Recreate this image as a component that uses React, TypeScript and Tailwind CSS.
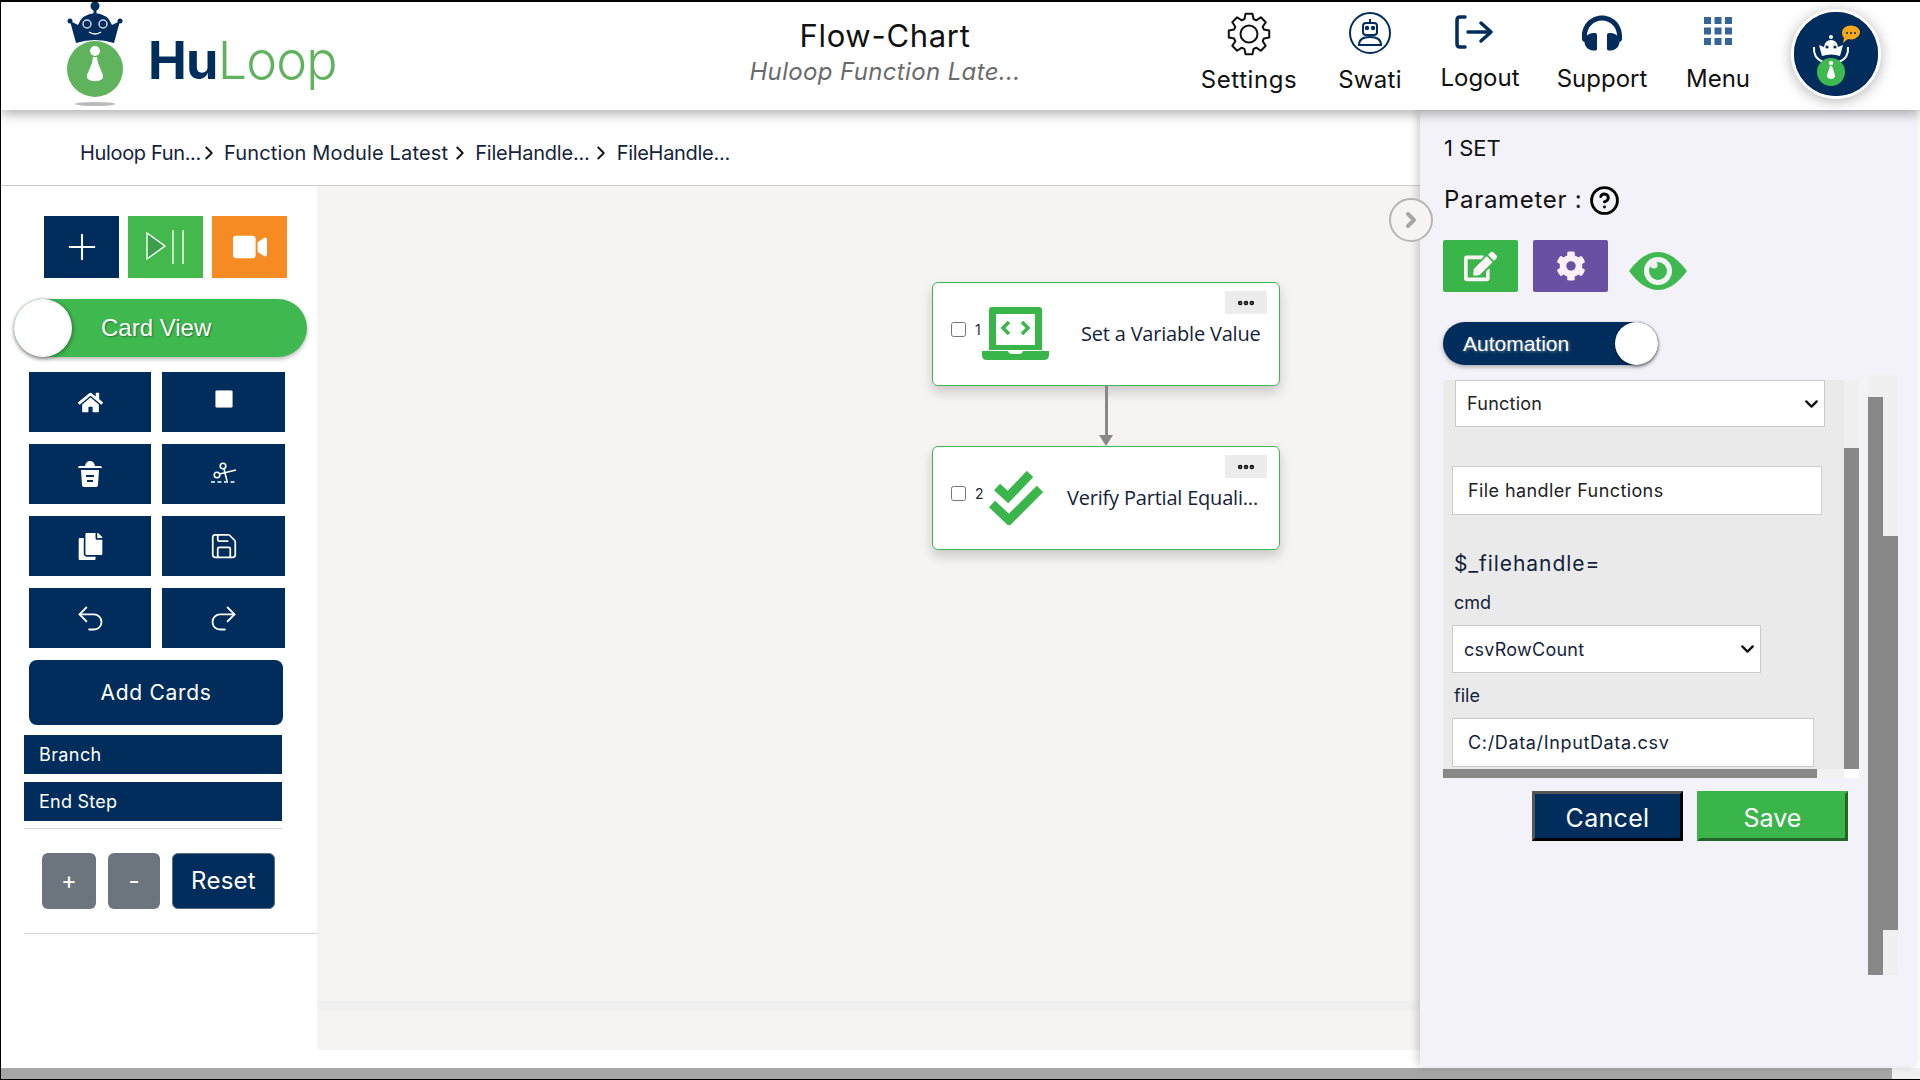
import { Plus, Save, Undo2, Redo2, CircleHelp, ChevronRight, ChevronDown, Ellipsis } from 'lucide-react'
import { FaHome, FaCopy, FaVideo, FaHeadphones, FaEdit, FaCog } from 'react-icons/fa'

const NAVY = '#002d5b'

function LogoBot() {
  return (
    <svg width="70" height="110" viewBox="60 0 70 110" className="shrink-0">
      <circle cx="95" cy="6" r="4.5" fill={NAVY} />
      <rect x="93.5" y="8" width="3" height="8" fill={NAVY} />
      <circle cx="70" cy="21" r="2.5" fill={NAVY} />
      <circle cx="120" cy="21" r="2.5" fill={NAVY} />
      <path d="M70 21 L78 25 Q82 14 95 13 Q108 14 112 25 L120 21 L114 43 Q95 37 76 43 Z" fill={NAVY} />
      <circle cx="87" cy="24" r="4" fill={NAVY} stroke="#cfd8e3" strokeWidth="1.5" />
      <circle cx="103" cy="24" r="4" fill={NAVY} stroke="#cfd8e3" strokeWidth="1.5" />
      <path d="M89 32 Q95 36 101 32" stroke="#fff" strokeWidth="1.5" fill="none" />
      <circle cx="95" cy="69" r="28" fill="#5fb35d" />
      <circle cx="95" cy="51" r="5" fill="#fff" />
      <path d="M93 57 h4 l1 6 l5 12 q1 6 -8 6 q-9 0 -8 -6 l5 -12 z" fill="#fff" />
      <ellipse cx="95" cy="104" rx="20" ry="2" fill="#bbb" />
    </svg>
  )
}

function AvatarBot() {
  return (
    <svg width="84" height="84" viewBox="0 0 84 84">
      <circle cx="42" cy="42" r="42" fill={NAVY} />
      <path d="M48 21 a9 7 0 1 1 6 6 l-5 4 l1 -5 a7 7 0 0 1 -2 -5z" fill="#f5a81c" />
      <circle cx="53" cy="21" r="1" fill={NAVY} />
      <circle cx="57" cy="21" r="1" fill={NAVY} />
      <circle cx="61" cy="21" r="1" fill={NAVY} />
      <circle cx="37" cy="25" r="2" fill="#fff" />
      <path d="M25 33 L30 35 Q31 28 37 28 Q43 28 44 35 L49 33 L46 44 Q37 41 28 44 Z" fill="#fff" />
      <circle cx="33" cy="35" r="1.6" fill={NAVY} />
      <circle cx="41" cy="35" r="1.6" fill={NAVY} />
      <path d="M20 35 Q19 46 29 50 M54 35 Q55 46 45 50" stroke="#fff" strokeWidth="2" fill="none" />
      <circle cx="37" cy="60" r="14" fill="#3fb94f" />
      <circle cx="37" cy="51" r="2.2" fill="#fff" />
      <path d="M36 54 h2 l3 9 q0 4 -4 4 q-4 0 -4 -4z" fill="#fff" />
    </svg>
  )
}

// 8 tooth cog outline
const gearPoints = Array.from({ length: 8 }, (_, i) => {
  const a = (i * Math.PI) / 4
  const pt = (r: number, off: number) => {
    const x = 22 + r * Math.cos(a + off)
    const y = 22 + r * Math.sin(a + off)
    return `${x.toFixed(2)},${y.toFixed(2)}`
  }
  return [pt(15.5, -0.3), pt(20.5, -0.17), pt(20.5, 0.17), pt(15.5, 0.3)].join(' ')
}).join(' ')

function GearIcon() {
  return (
    <svg width="44" height="44" viewBox="0 0 44 44" fill="none" stroke="#111" strokeWidth="2" strokeLinejoin="round">
      <polygon points={gearPoints} />
      <circle cx="22" cy="22" r="8.5" />
    </svg>
  )
}

function SwatiIcon() {
  return (
    <svg width="42" height="42" viewBox="0 0 42 42" fill="none" stroke={NAVY} strokeWidth="2">
      <circle cx="21" cy="21" r="20" />
      <rect x="14" y="11" width="14" height="12" rx="3" />
      <circle cx="18" cy="16" r="1.2" fill={NAVY} />
      <circle cx="24" cy="16" r="1.2" fill={NAVY} />
      <path d="M21 7 v4" />
      <path d="M10 33 Q10 25 21 25 Q32 25 32 33 Z" />
    </svg>
  )
}

function LogoutIcon() {
  return (
    <svg width="40" height="34" viewBox="0 0 40 34" fill="none" stroke={NAVY} strokeWidth="3.5" strokeLinecap="round" strokeLinejoin="round">
      <path d="M10 2 H5 Q2 2 2 5 V29 Q2 32 5 32 H10" />
      <path d="M13 17 H36 M26 8 L36 17 L26 26" />
    </svg>
  )
}

function MenuIcon() {
  const spots = [0, 1, 2].flatMap(r => [0, 1, 2].map(c => [c, r]))
  return (
    <svg width="28" height="28" viewBox="0 0 28 28">
      {spots.map(([c, r]) => (
        <rect key={`${c}-${r}`} x={c * 10.5} y={r * 10.5} width="7" height="7" fill="#34659a" />
      ))}
    </svg>
  )
}

function PlayBars() {
  return (
    <svg width="40" height="36" viewBox="0 0 40 36" fill="none" stroke="#fff" strokeWidth="1.4">
      <path d="M1 4 L19 17 L1 30 Z" fill="#3f9e4c" />
      <path d="M27 1 V35 M37 1 V35" />
    </svg>
  )
}

function TrashIcon() {
  return (
    <svg width="24" height="28" viewBox="0 0 24 28" fill="#fff">
      <path d="M0 8 Q0 6 2 6 H7 Q8 1 12 1 Q16 1 17 6 H22 Q24 6 24 8 Z" />
      <path d="M3 10 H21 L20 25 Q20 27 17 27 H7 Q4 27 4 25 Z" />
      <rect x="8" y="15" width="8" height="2" fill={NAVY} />
      <rect x="9" y="20" width="6" height="2" fill={NAVY} />
    </svg>
  )
}

function CutIcon() {
  return (
    <svg width="26" height="24" viewBox="0 0 26 24" fill="none" stroke="#fff" strokeWidth="1.6">
      <circle cx="12" cy="4" r="2.8" />
      <circle cx="6" cy="13" r="2.8" />
      <path d="M13 7 L16 19 M8.5 12 L25 8" />
      <path d="M0 20 H25" strokeDasharray="4 2.5" />
    </svg>
  )
}

function LaptopIcon() {
  return (
    <svg width="67" height="54" viewBox="0 0 67 54">
      <path d="M8 0 H57 Q60 0 60 3 V43 H7 V3 Q7 0 10 0 Z" fill="#3ab54a" />
      <rect x="14" y="7" width="39" height="31" fill="#fff" />
      <path d="M27 15 L21 21 L27 27 M40 15 L46 21 L40 27" fill="none" stroke="#3ab54a" strokeWidth="3.5" />
      <path d="M0 44 H26 Q27 47 30 47 H37 Q40 47 41 44 H67 V48 Q67 53 62 53 H5 Q0 53 0 48 Z" fill="#3ab54a" />
    </svg>
  )
}

function ChecksIcon() {
  return (
    <svg width="54" height="54" viewBox="0 0 54 54" fill="none" stroke="#3ab54a" strokeWidth="9">
      <path d="M8 16 L19 26 L41 3" />
      <path d="M3 33 L20 49 L51 18" />
    </svg>
  )
}

function EyeIcon() {
  return (
    <svg width="58" height="38" viewBox="0 0 58 38">
      <path d="M0 19 Q14 0 29 0 Q44 0 58 19 Q44 38 29 38 Q14 38 0 19 Z" fill="#3fb94f" />
      <circle cx="29" cy="19" r="14" fill="#f2f2f8" />
      <circle cx="29" cy="19" r="9" fill="#3fb94f" />
      <circle cx="25" cy="13" r="3.5" fill="#f2f2f8" />
    </svg>
  )
}

const gridButtons = [
  <FaHome size={25} color="#fff" className="mt-[1px]" />,
  <span className="block w-[18px] h-[18px] -mt-[6px] rounded-[2px] bg-white border border-gray-400" />,
  <TrashIcon />,
  <CutIcon />,
  <FaCopy size={27} color="#fff" />,
  <Save size={30} color="#fff" strokeWidth={1.4} />,
  <Undo2 size={33} color="#fff" strokeWidth={1.3} />,
  <Redo2 size={33} color="#fff" strokeWidth={1.3} />,
]

function FlowCard({ top, num, icon, label, pad }: { top: number; num: string; icon: React.ReactNode; label: string; pad: string }) {
  return (
    <div
      className="absolute left-[615px] w-[348px] h-[104px] bg-white border border-[#3fb94f] rounded-[6px] shadow-[0_6px_12px_rgba(0,0,0,0.18)]"
      style={{ top }}
    >
      <div className="absolute right-[12px] top-[8px] w-[42px] h-[23px] bg-[#ececec] flex items-center justify-center">
        <Ellipsis size={20} strokeWidth={3.5} color="#111" />
      </div>
      <div className="flex items-center h-full pl-[18px]">
        <input type="checkbox" className="w-[15px] h-[15px] -mt-[10px]" />
        <span className="ml-[9px] w-[8px] -mt-[10px] text-[14px] text-gray-800">{num}</span>
        <div className="-ml-[1px] w-[67px] flex justify-center">{icon}</div>
        <span className={`${pad} text-[20px] tracking-[-0.2px] text-[#14233a] whitespace-nowrap [font-family:'Open_Sans',sans-serif]`}>{label}</span>
      </div>
    </div>
  )
}

function PanelSelect({ value, className }: { value: string; className: string }) {
  return (
    <div className={`relative shrink-0 ${className}`}>
      <select defaultValue={value} className="w-full h-full appearance-none bg-white border border-[#ccc] pl-[11px] tracking-[0.25px]">
        <option>{value}</option>
      </select>
      <ChevronDown size={21} color="#111" strokeWidth={2.6} className="absolute right-[3px] top-1/2 -translate-y-1/2 pointer-events-none" />
    </div>
  )
}

export default function App() {
  return (
    <div className="w-[1920px] h-[1080px] overflow-hidden flex flex-col bg-white border-l border-t-2 border-b border-black text-[#14233a] [font-family:Inter,sans-serif]">
      {/* Header */}
      <header className="relative z-20 h-[108px] shrink-0 flex bg-white shadow-[0_3px_12px_rgba(0,0,0,0.35)]">
        <div className="w-[639px] flex -mt-[2px] pl-[59px]">
          <LogoBot />
          <div className="ml-[18px] mt-[28px] text-[52px] leading-[66px] tracking-[-0.8px] whitespace-nowrap">
            <span className="font-bold text-[#002d5b]">Hu</span>
            <span className="font-light text-[#5fb35d]">Loop</span>
          </div>
        </div>
        <div className="w-[490px] flex flex-col items-center pt-[15px]">
          <div className="text-[31px] leading-[38px] tracking-[0.7px] text-[#111]">Flow-Chart</div>
          <div className="text-[24px] leading-[34px] tracking-[0.35px] italic text-[#6b6b6b]">Huloop Function Late...</div>
        </div>
        <nav className="ml-[59px] flex text-[#111] text-[24px] leading-[32px]">
          <div className="w-[120px] flex flex-col items-center pt-[10px]">
            <GearIcon />
            <div className="mt-[8px] tracking-[0.55px]">Settings</div>
          </div>
          <div className="w-[120px] flex flex-col items-center pt-[10px] pl-[2px]">
            <SwatiIcon />
            <div className="mt-[10px] tracking-[0.3px]">Swati</div>
          </div>
          <div className="w-[102px] flex flex-col items-center pt-[13px]">
            <div className="-ml-[10px]"><LogoutIcon /></div>
            <div className="mt-[13px]">Logout</div>
          </div>
          <div className="w-[142px] flex flex-col items-center pt-[11px]">
            <FaHeadphones size={40} color={NAVY} />
            <div className="mt-[10px]">Support</div>
          </div>
          <div className="w-[90px] flex flex-col items-center pt-[15px]">
            <MenuIcon />
            <div className="mt-[18px]">Menu</div>
          </div>
        </nav>
        <div className="ml-[28px] mt-[7px] w-[90px] h-[90px] rounded-full border-[3px] border-white flex items-center justify-center shadow-[0_2px_14px_rgba(0,0,0,0.3)] bg-[#002d5b]">
          <AvatarBot />
        </div>
      </header>

      <div className="flex flex-1 min-h-0">
        {/* Breadcrumb, tools and canvas */}
        <div className="w-[1419px] flex flex-col">
          <div className="h-[76px] shrink-0 border-b border-[#ccc] flex items-center pt-[11px] pl-[79px] text-[20px] text-[#14233a] whitespace-nowrap">
            <span className="tracking-[-0.35px]">Huloop Fun...</span>
            <ChevronRight size={22} color="#111" strokeWidth={2} className="-ml-[3px]" />
            <span className="ml-[4px] tracking-[0.15px]">Function Module Latest</span>
            <ChevronRight size={22} color="#111" strokeWidth={2} className="ml-[1px]" />
            <span className="ml-[4px] tracking-[-0.2px]">FileHandle...</span>
            <ChevronRight size={22} color="#111" strokeWidth={2} />
            <span className="ml-[5px] tracking-[-0.3px]">FileHandle...</span>
          </div>
          <div className="flex">
            <aside className="w-[316px] shrink-0 flex flex-col text-white">
              <div className="flex gap-[9px] mt-[30px] ml-[43px]">
                <button className="w-[75px] h-[62px] bg-[#002d5b] flex items-center justify-center">
                  <Plus size={42} color="#fff" strokeWidth={1.2} />
                </button>
                <button className="w-[75px] h-[62px] bg-[#43b94d] flex items-center justify-center">
                  <PlayBars />
                </button>
                <button className="w-[75px] h-[62px] bg-[#f68b24] flex items-center justify-center">
                  <FaVideo size={34} color="#fff" />
                </button>
              </div>
              <div className="mt-[21px] ml-[13px] w-[293px] h-[58px] rounded-full bg-[#3fb94f] flex items-center shadow-[0_2px_4px_rgba(0,0,0,0.3)]">
                <span className="w-[58px] h-[58px] rounded-full bg-white shadow-[1px_1px_4px_rgba(0,0,0,0.4)]" />
                <span className="ml-[29px] text-[24px] [font-family:'Liberation_Sans',sans-serif] [text-shadow:1px_1px_2px_rgba(0,0,0,0.4)]">Card View</span>
              </div>
              <div className="mt-[15px] ml-[28px] grid grid-cols-[122px_123px] gap-x-[11px] gap-y-[12px]">
                {gridButtons.map((icon, i) => (
                  <button key={i} className="h-[60px] bg-[#002d5b] flex items-center justify-center">{icon}</button>
                ))}
              </div>
              <button className="mt-[12px] ml-[28px] w-[254px] h-[65px] rounded-[8px] bg-[#002d5b] text-[21px] tracking-[0.7px]">Add Cards</button>
              <div className="mt-[10px] ml-[23px] w-[258px] h-[39px] bg-[#002d5b] flex items-center pl-[15px] text-[18px] tracking-[0.4px]">Branch</div>
              <div className="mt-[8px] ml-[23px] w-[258px] h-[39px] bg-[#002d5b] flex items-center pl-[15px] text-[18px] tracking-[0.25px]">End Step</div>
              <div className="mt-[7px] ml-[23px] w-[258px] border-t border-[#d5d5d5]" />
              <div className="mt-[24px] ml-[41px] flex gap-[12px]">
                <button className="w-[54px] h-[56px] rounded-[6px] bg-[#6c757d] text-[24px]">+</button>
                <button className="w-[52px] h-[56px] rounded-[6px] bg-[#6c757d] text-[24px]">-</button>
                <button className="w-[103px] h-[56px] rounded-[6px] bg-[#002d5b] border border-[#5a6d85] text-[24px] tracking-[0.25px]">Reset</button>
              </div>
              <div className="mt-[24px] ml-[23px] border-t border-[#d5d5d5]" />
            </aside>
            <main className="flex-1 h-[864px] flex flex-col">
              <div className="relative flex-1 bg-[#f5f4f2]">
                <FlowCard top={96} num="1" icon={<LaptopIcon />} label="Set a Variable Value" pad="ml-[32px]" />
                <div className="absolute left-[788px] top-[199px] w-[3px] h-[52px] bg-[#888]" />
                <div className="absolute left-[782px] top-[249px] w-0 h-0 border-x-[7.5px] border-x-transparent border-t-[11px] border-t-[#888]" />
                <FlowCard top={260} num="2" icon={<ChecksIcon />} label="Verify Partial Equali..." pad="ml-[18px]" />
              </div>
              <div className="h-[9px] bg-[#f0f0f0]" />
              <div className="h-[40px] bg-[#f5f4f2]" />
            </main>
          </div>
        </div>

        {/* Parameter panel */}
        <aside className="relative z-10 w-[497px] h-[956px] bg-[#f2f2f8] pl-[24px] shadow-[-3px_0_8px_rgba(0,0,0,0.18)]">
          <div className="absolute -left-[31px] top-[88px] w-[44px] h-[44px] rounded-full border-2 border-[#b5b5b5] bg-[#f5f4f2] flex items-center justify-center">
            <ChevronRight size={24} color="#a9a5a5" strokeWidth={4} />
          </div>
          <div className="mt-[26px] text-[22px] leading-[24px] text-[#111] inline-block">1 SET</div>
          <div className="mt-[22px] h-[32px] flex items-center text-[24px] tracking-[0.7px] text-[#111]">
            Parameter :
            <CircleHelp size={31} color="#000" strokeWidth={2.2} className="ml-[7px]" />
          </div>
          <div className="mt-[24px] -ml-px flex">
            <button className="w-[75px] h-[52px] rounded-[2px] bg-[#3ab54a] flex items-center justify-center">
              <FaEdit size={33} color="#fdf5f5" />
            </button>
            <button className="ml-[15px] w-[75px] h-[52px] rounded-[2px] bg-[#6850a2] flex items-center justify-center">
              <FaCog size={30} color="#fdf0f5" />
            </button>
            <div className="ml-[21px] mt-[12px]"><EyeIcon /></div>
          </div>
          <div className="mt-[30px] -ml-px w-[215px] h-[43px] rounded-full bg-[#002d5b] flex items-center justify-between shadow-[0_2px_4px_rgba(0,0,0,0.3)]">
            <span className="ml-[20px] text-[21px] text-white [font-family:'Liberation_Sans',sans-serif] [text-shadow:1px_1px_3px_rgba(255,255,255,0.4)]">Automation</span>
            <span className="w-[43px] h-[43px] rounded-full bg-white shadow-[0_1px_3px_rgba(0,0,0,0.5)]" />
          </div>
          <div className="mt-[15px] -ml-px w-[416px] h-[398px] flex">
            <div className="w-[401px] flex flex-col">
              <div className="h-[389px] bg-[#eaeaea] rounded-tl-[4px] flex flex-col text-[18px] text-[#222]">
                <PanelSelect value="Function" className="ml-[12px] w-[370px] h-[47px]" />
                <input defaultValue="File handler Functions" className="mt-[39px] ml-[9px] w-[370px] h-[49px] shrink-0 bg-white border border-[#ccc] pl-[15px] tracking-[0.4px]" />
                <div className="mt-[35px] ml-[11px] text-[21px] leading-[28px] tracking-[0.95px] text-[#14233a]">$_filehandle=</div>
                <div className="mt-[13px] ml-[11px] leading-[24px] text-[#14233a]">cmd</div>
                <PanelSelect value="csvRowCount" className="mt-[10px] ml-[9px] w-[309px] h-[48px] text-[#14233a]" />
                <div className="mt-[11px] ml-[11px] leading-[24px] text-[#14233a]">file</div>
                <input defaultValue="C:/Data/InputData.csv" className="mt-[10px] ml-[9px] w-[362px] h-[49px] shrink-0 bg-white border border-[#ccc] pl-[15px] tracking-[0.65px] text-[#14233a]" />
              </div>
              <div className="h-[9px] flex bg-[#f1f1f1]">
                <div className="w-[374px] bg-[#888]" />
              </div>
            </div>
            <div className="w-[15px] flex flex-col">
              <div className="h-[68px] bg-[#f0f0f0]" />
              <div className="h-[321px] bg-[#888]" />
              <div className="h-[9px] bg-white" />
            </div>
          </div>
          <div className="mt-[13px] ml-[88px] flex gap-[14px] text-[25px] text-white">
            <button className="w-[151px] h-[50px] bg-[#002d5b] border-[3px] border-t-[#555] border-l-[#555] border-r-black border-b-black pt-[5px] tracking-[0.3px]">Cancel</button>
            <button className="w-[151px] h-[50px] bg-[#3ab54a] border-[3px] border-t-[#3ab54a] border-l-[#3ab54a] border-r-[#22662b] border-b-[#22662b] pt-[5px]">Save</button>
          </div>
          {/* outer scrollbars of the panel */}
          <div className="absolute left-[448px] top-[265px] w-[30px] h-[600px] bg-[#f0f0f0]">
            <div className="absolute left-0 top-[22px] bottom-0 w-[15px] bg-[#888]" />
            <div className="absolute left-[15px] top-[161px] h-[394px] w-[15px] bg-[#888]" />
          </div>
        </aside>
      </div>

      {/* Page scrollbar */}
      <div className="h-[11px] shrink-0 flex bg-[#f1f1f1]">
        <div className="w-[1891px] bg-[#a6a6a6]" />
      </div>
    </div>
  )
}
